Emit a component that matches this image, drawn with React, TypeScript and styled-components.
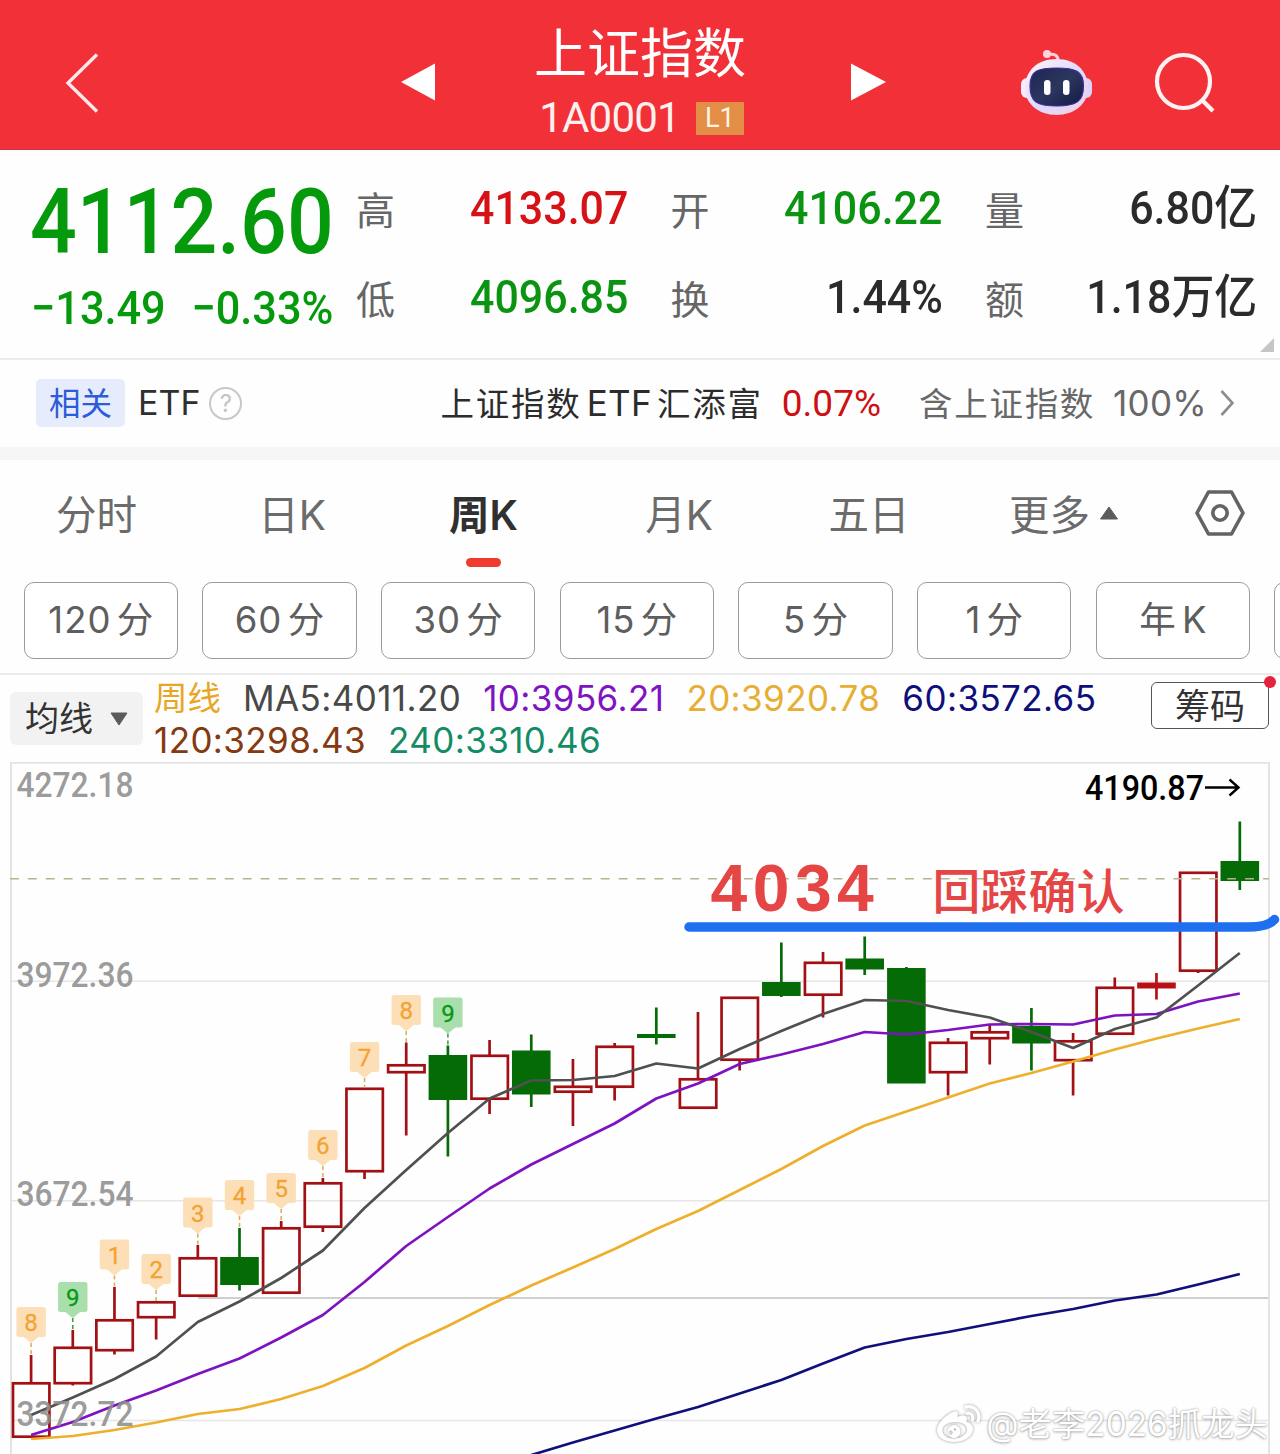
import React from 'react';
import styled, { createGlobalStyle } from 'styled-components';

const latin = `Inter, "Noto Sans CJK SC", sans-serif`;
const din = `Roboto, "Noto Sans CJK SC", sans-serif`;

const GlobalStyle = createGlobalStyle`
  * { box-sizing: border-box; }
  html, body { margin: 0; padding: 0; background: #fefefe; }
  body { font-family: ${latin}; overflow: hidden; }
`;

const Page = styled.main`
  width: 1280px;
  height: 1454px;
  overflow: hidden;
  display: flex;
  flex-direction: column;
  position: relative;
  background: #fefefe;
  white-space: nowrap;
`;

/* ---------- header ---------- */
const Header = styled.header`
  height: 150px;
  flex: none;
  display: grid;
  grid-template-columns: 400px 37px 405px 45px 133px 74px 186px;
  align-items: center;
  background: #f23038;
  border-bottom: 1px solid #c9383f;
  color: #fff;
  svg { display: block; }
`;
const BackSlot = styled.div`
  padding: 17px 0 0 64px;
`;
const ArrowSlot = styled.div<{ $end?: boolean }>`
  padding-top: 15px;
  display: flex;
  justify-content: ${(p) => (p.$end ? 'flex-end' : 'flex-start')};
`;
const TitleBlock = styled.div`
  display: flex;
  flex-direction: column;
  align-items: center;
  padding: 20px 0 0 1px;
`;
const Title = styled.h1`
  margin: 0;
  font: 400 53px/66px ${latin};
`;
const CodeRow = styled.div`
  display: flex;
  align-items: center;
  gap: 16px;
  height: 62px;
  padding-left: 3px;
`;
const Code = styled.span`
  font: 400 42px/60px ${din};
  letter-spacing: -0.8px;
  color: #fff0f0;
`;
const Level = styled.span`
  width: 48px;
  height: 33px;
  margin-top: 2px;
  background: #e38e46;
  font: 400 27px/33px ${din};
  color: #fff4e6;
  text-align: center;
`;
const RobotSlot = styled.div`
  padding-top: 14px;
`;
const SearchSlot = styled.div`
  padding: 17px 0 0 60px;
`;

/* ---------- quote ---------- */
const Quote = styled.section`
  height: 210px;
  flex: none;
  display: grid;
  grid-template-columns: 325px 1fr;
  padding: 13px 22px 0 31px;
  border-bottom: 2px solid #ececec;
  position: relative;
`;
const PriceCol = styled.div`
  color: #049a0c;
  font-family: ${din};
  font-weight: 500;
`;
const Price = styled.div`
  margin-left: -1px;
  font-size: 91px;
  line-height: 118px;
  height: 116px;
  transform: scaleX(0.905);
  transform-origin: left;
`;
const Changes = styled.div`
  display: flex;
  gap: 28px;
  font-size: 47px;
  line-height: 57px;
  transform: scaleX(0.92);
  transform-origin: left;
`;
const Stats = styled.div`
  display: grid;
  grid-template-columns: repeat(3, 272px);
  grid-auto-rows: 89px;
  column-gap: 42.5px;
`;
const Stat = styled.div`
  display: flex;
  justify-content: space-between;
`;
const StatLabel = styled.span`
  font: 400 39px/96px ${latin};
  color: #666;
`;
const StatValue = styled.span<{ $color: string }>`
  font: 500 47px/89px ${din};
  color: ${(p) => p.$color};
  transform: scaleX(0.913);
  transform-origin: right;
`;
const Corner = styled.i`
  position: absolute;
  right: 6px;
  bottom: 6px;
  border-left: 14px solid transparent;
  border-bottom: 14px solid #c6c6c6;
`;

/* ---------- related ETF ---------- */
const Related = styled.section`
  height: 100px;
  flex: none;
  display: flex;
  align-items: center;
  padding: 0 46px 1px 36px;
  border-bottom: 13px solid #f6f6f6;
`;
const Badge = styled.span`
  width: 89px;
  height: 48px;
  border-radius: 5px;
  background: #e7ecfd;
  color: #2d5cd8;
  text-align: center;
  font: 400 31.5px/49px ${latin};
`;
const EtfLabel = styled.span`
  margin: 0 9px 0 13px;
  font: 400 34px/50px ${latin};
  color: #2f2f2f;
`;
const Help = styled.span`
  width: 33px;
  height: 33px;
  border: 2px solid #c8c8c8;
  border-radius: 50%;
  color: #c4c4c4;
  text-align: center;
  font: 400 24px/29px ${latin};
`;
const EtfName = styled.span`
  margin-left: auto;
  font: 400 33.5px/50px ${latin};
  letter-spacing: 1.8px;
  color: #2c2c2c;
  span { font-size: 35px; letter-spacing: 0.3px; margin: 0 5px; }
`;
const EtfChange = styled.span`
  margin: 2px 38px 0 19px;
  font: 400 37px/50px ${din};
  color: #cc1014;
`;
const EtfShare = styled.span`
  margin-right: 13px;
  font: 400 33.5px/50px ${latin};
  letter-spacing: 1.7px;
  color: #686868;
  span { margin-left: 18px; font-size: 35px; letter-spacing: 0.3px; }
`;

/* ---------- period tabs ---------- */
const Tabs = styled.nav`
  height: 122px;
  flex: none;
  display: grid;
  grid-template-columns: 193px 198px 185px 206px 174px 240px 84px;
`;
const Tab = styled.div<{ $active?: boolean }>`
  display: flex;
  flex-direction: column;
  align-items: center;
  font: 400 40.5px/112px ${latin};
  font-weight: ${(p) => (p.$active ? 600 : 400)};
  color: ${(p) => (p.$active ? '#303030' : '#6b6b6b')};
  &::after {
    content: '';
    width: 35px;
    height: 9px;
    margin-top: -14px;
    border-radius: 4.5px;
    background: ${(p) => (p.$active ? '#f03b30' : 'transparent')};
  }
`;
const More = styled.div`
  display: flex;
  gap: 9px;
  padding-left: 53px;
  font: 400 40.5px/112px ${latin};
  color: #6b6b6b;
  svg { margin-top: 46px; }
`;
const SettingsSlot = styled.div`
  padding: 30px 0 0;
  margin-left: -1px;
`;
const Chips = styled.div`
  height: 93px;
  flex: none;
  display: flex;
  align-items: flex-start;
  gap: 24.2px;
  padding-left: 23.5px;
  overflow: hidden;
  border-bottom: 2px solid #ececec;
`;
const Chip = styled.button`
  flex: none;
  width: 154.5px;
  height: 77px;
  padding: 0 0 0 1px;
  border: 1.5px solid #9b9b9b;
  border-radius: 10px;
  background: #fff;
  font: 400 36.5px/75px ${latin};
  color: #5e5e5e;
  letter-spacing: 1px;
  word-spacing: -6px;
`;

/* ---------- averages ---------- */
const Averages = styled.section`
  height: 87px;
  flex: none;
  display: grid;
  grid-template-columns: 133px 1fr 118px;
  column-gap: 11px;
  align-items: start;
  padding: 0 11px 0 10px;
`;
const Picker = styled.button`
  display: flex;
  align-items: center;
  justify-content: space-between;
  height: 53px;
  margin-top: 17px;
  padding: 0 15px;
  border: 0;
  border-radius: 6px;
  background: #f2f2f2;
  font: 400 34px/52px ${latin};
  color: #333;
`;
const Legend = styled.div`
  display: flex;
  flex-wrap: wrap;
  column-gap: 22px;
  padding-top: 2px;
  font: 400 35px/42px ${latin};
`;
const LegendItem = styled.span<{ $color: string; $name?: boolean }>`
  color: ${(p) => p.$color};
  font-size: ${(p) => (p.$name ? 33.5 : 35)}px;
  letter-spacing: ${(p) => (p.$name ? 0 : 0.4)}px;
`;
const ChipsButton = styled.button`
  position: relative;
  height: 47px;
  margin-top: 7px;
  padding: 0;
  border: 1.5px solid #555;
  border-radius: 6px;
  background: #fff;
  font: 400 35px/44px ${latin};
  color: #333;
  &::after {
    content: '';
    position: absolute;
    top: -7px;
    right: -8px;
    width: 12px;
    height: 12px;
    border-radius: 50%;
    background: #e5233d;
  }
`;

/* ---------- chart ---------- */
const ChartArea = styled.section`
  position: relative;
  height: 692px;
  svg { display: block; }
`;
const Watermark = styled.div`
  position: absolute;
  right: 12px;
  bottom: 6px;
  display: flex;
  align-items: center;
  gap: 4px;
  color: #fff;
  font: 400 33.4px/48px ${latin};
  text-shadow: 0 0 2px rgba(0, 0, 0, 0.36), 0 1px 3px rgba(0, 0, 0, 0.26);
  svg { filter: drop-shadow(0 0 1.5px rgba(0, 0, 0, 0.42)); }
`;

type Kind = 'up' | 'down' | 'flat';
type Candle = [Kind, number, number, number, number];

const candles: Candle[] = [
  ['up', 1355, 1382, 1438, 1438],
  ['up', 1330, 1346.5, 1384.5, 1385.5],
  ['up', 1287, 1319, 1351.5, 1354.5],
  ['up', 1301, 1301, 1318.5, 1339.5],
  ['up', 1245, 1257, 1297, 1297],
  ['down', 1228, 1257, 1285, 1290.5],
  ['up', 1221, 1227, 1294, 1294],
  ['up', 1178, 1182, 1228, 1232],
  ['up', 1087.5, 1087.5, 1172.5, 1179],
  ['up', 1042.5, 1064, 1073.5, 1135.5],
  ['down', 1045.5, 1055, 1100, 1156.5],
  ['up', 1040, 1054.5, 1100, 1114],
  ['down', 1034.5, 1050.5, 1094.5, 1107],
  ['up', 1059, 1085.5, 1093, 1126],
  ['up', 1043, 1045.5, 1088, 1100.5],
  ['down', 1007.5, 1034, 1038, 1044.5],
  ['up', 1012, 1078, 1109, 1109],
  ['up', 996.5, 996.5, 1061, 1070.5],
  ['down', 942.5, 982, 996, 997],
  ['up', 952, 961.5, 996, 1017.5],
  ['down', 936.5, 958.5, 969.5, 975],
  ['down', 967, 968, 1083.5, 1083.5],
  ['up', 1038, 1041.5, 1073.5, 1095.5],
  ['up', 1025, 1031, 1039.5, 1064.5],
  ['down', 1008, 1026, 1043.5, 1070.5],
  ['up', 1033, 1040, 1061.5, 1095.5],
  ['up', 977.5, 986.5, 1035, 1035],
  ['flat', 973, 982.5, 988.5, 999.5],
  ['up', 871.5, 871.5, 972, 973],
  ['down', 821.5, 861, 881, 890],
];

const ma5 = [1415, 1397.5, 1379, 1356.5, 1322, 1301.5, 1278, 1250.5, 1208, 1170, 1133, 1098.5, 1080.5, 1080, 1076, 1063.5, 1068.5, 1049, 1031, 1014, 1000, 1001, 1010, 1017.5, 1032, 1048, 1029, 1017.5, 985.5, 953];
const ma10 = [1435, 1422, 1405.5, 1390.5, 1374, 1358.5, 1337.5, 1315, 1282, 1246, 1217, 1188.5, 1164.5, 1144, 1123.5, 1098.5, 1083.5, 1064, 1054.5, 1044, 1032, 1034.5, 1030, 1024.5, 1024, 1024.5, 1015.5, 1014, 1001.5, 993.5];
const ma20 = [1439, 1436, 1430, 1422.5, 1414, 1409, 1399, 1386, 1368, 1345.5, 1326, 1305, 1285.5, 1267.5, 1249, 1229, 1211, 1190, 1169, 1146, 1125.5, 1111.5, 1097.5, 1083.5, 1073, 1061.5, 1049.5, 1038.5, 1028.5, 1019];
const ma60 = [1455, 1442.5, 1430.5, 1418.5, 1407, 1393.5, 1380, 1363.5, 1347.5, 1339, 1332, 1324, 1316, 1309, 1300.5, 1294.5, 1284.5, 1274];

const xAt = (i: number) => 31.1 + i * 41.68;
const points = (values: number[], start = 0) =>
  values.map((y, i) => `${xAt(i + start).toFixed(1)},${y}`).join(' ');

const tags: [number, number][] = [
  [8, 1307], [9, 1282], [1, 1239.5], [2, 1254], [3, 1197.5], [4, 1180],
  [5, 1173], [6, 1130], [7, 1042], [8, 995], [9, 997.5],
];
const axis: [string, number][] = [
  ['4272.18', 797], ['3972.36', 986.5], ['3672.54', 1206], ['3372.72', 1425.5],
];

const CandleShape = ({ candle, x }: { candle: Candle; x: number }) => {
  const [kind, high, top, bottom, low] = candle;
  const color = kind === 'down' ? '#046b06' : kind === 'up' ? '#a31014' : '#b81014';
  return (
    <g stroke={color} strokeWidth={2.7}>
      {high < top && <line x1={x} x2={x} y1={high} y2={top + 1} />}
      {low > bottom && <line x1={x} x2={x} y1={bottom - 1} y2={low} />}
      {kind === 'up' ? (
        <rect x={x - 18.1} y={top + 1.3} width={36.4} height={bottom - top - 2.6} fill="none" />
      ) : (
        <rect x={x - 19.3} y={top} width={38.6} height={bottom - top} fill={color} stroke="none" />
      )}
    </g>
  );
};

const Tag = ({ value, x, y, end }: { value: number; x: number; y: number; end: number }) => {
  const green = value === 9;
  const fill = green ? '#a9dfac' : '#fcdfb6';
  return (
    <g>
      <line x1={x} x2={x} y1={y + 36} y2={end} stroke={green ? '#4b9a4b' : '#d3b560'} strokeWidth={1.6} strokeDasharray="4 3" />
      <rect x={x - 14.7} y={y} width={29.4} height={30} rx={2.5} fill={fill} />
      <path d={`M${x - 8} ${y + 29.5}h16l-5.500 4.500q-2.500 3.500 -5 0z`} fill={fill} />
      <text x={x} y={y + 24} textAnchor="middle" fontFamily="Roboto, sans-serif" fontSize={24} fontWeight={400} stroke={green ? '#069a10' : '#f3a234'} strokeWidth={0.3} fill={green ? '#069a10' : '#f3a234'}>
        {value}
      </text>
    </g>
  );
};

const Chart = () => (
  <svg width="1280" height="692" viewBox="0 762 1280 692">
    <g stroke="#e6e6e6" strokeWidth={1.6}>
      <line x1={11} x2={1269} y1={981.3} y2={981.3} />
      <line x1={11} x2={1269} y1={1200.8} y2={1200.8} />
      <line x1={11} x2={1269} y1={1420.5} y2={1420.5} />
    </g>
    <rect x={11} y={762.8} width={1258} height={720} fill="none" stroke="#e4e4e4" strokeWidth={2} />
    <line x1={198} x2={1268} y1={1298} y2={1298} stroke="#cfcfcf" strokeWidth={2.2} />
    {candles.map((c, i) => (
      <CandleShape key={i} candle={c} x={xAt(i)} />
    ))}
    <line x1={10} x2={1269} y1={878.800} y2={878.800} stroke="#b7b291" strokeWidth={1.5} strokeDasharray="8.9 9" />
    <g fill="none" strokeWidth={2.7} strokeLinejoin="round">
      <polyline points={points(ma60, 12)} stroke="#10107c" />
      <polyline points={points(ma20)} stroke="#eeb02c" />
      <polyline points={points(ma10)} stroke="#7d12c0" />
      <polyline points={points(ma5)} stroke="#505050" />
    </g>
    {tags.map(([value, y], i) => (
      <Tag key={i} value={value} x={xAt(i)} y={y} end={candles[i][1]} />
    ))}
    <g fontFamily="Roboto, sans-serif" fontSize={35.500} fontWeight={500}>
      {axis.map(([label, y]) => (
        <text key={label} x={16.500} y={y} fill="#8e8e8e" fillOpacity={0.9} textLength={117} lengthAdjust="spacingAndGlyphs">
          {label}
        </text>
      ))}
      <text x={1085} y={800} fill="#000" textLength={119} lengthAdjust="spacingAndGlyphs">4190.87</text>
    </g>
    <path d="M1205 787.500H1238M1229.500 779.500L1238.500 787.500L1229.500 795.500" fill="none" stroke="#000" strokeWidth={2.4} />
    <text x={710.500} y={911} fontFamily='"Liberation Sans", sans-serif' fontSize={66} fontWeight={700} letterSpacing={5.500} fill="#e64546">4034</text>
    <text x={932.500} y={908.500} fontFamily='"Noto Sans CJK SC", sans-serif' fontSize={48} fontWeight={500} fill="#e64546">回踩确认</text>
    <path d="M689 927H1248Q1268 927 1274.500 919.500" fill="none" stroke="#1f70f0" strokeWidth={9.500} strokeLinecap="round" />
  </svg>
);

const Robot = () => (
  <svg width="74" height="68" viewBox="0 0 74 68">
    <defs>
      <linearGradient id="shell" x1="0" y1="0" x2="1" y2="1">
        <stop offset="0" stopColor="#fff3f7" />
        <stop offset=".55" stopColor="#dfd9fb" />
        <stop offset="1" stopColor="#f4cfe4" />
      </linearGradient>
      <linearGradient id="visor" x1="0" y1="0" x2="1" y2="1">
        <stop offset="0" stopColor="#1c2650" />
        <stop offset=".5" stopColor="#2c365f" />
        <stop offset="1" stopColor="#111a44" />
      </linearGradient>
    </defs>
    <path d="M28 6.500q10-2 10.500 7" fill="none" stroke="#fbd0dc" strokeWidth="3" />
    <circle cx="27" cy="6" r="4" fill="#fcd3de" />
    <rect x="1" y="30" width="12" height="20" rx="6" fill="#f3ebff" />
    <rect x="60" y="30" width="12" height="20" rx="6" fill="#d9d3fa" />
    <path d="M36.500 11C55 11 67 22 68 38C69 56 54 67 36.500 67S4 56 5 38C6 22 18 11 36.500 11z" fill="url(#shell)" />
    <path d="M37 20C55 20 63.500 23 63.500 38S57 58 37 58S10 54 10 38S19 20 37 20z" fill="url(#visor)" stroke="#3a31a0" strokeWidth="1.200" />
    <rect x="24" y="32" width="6.500" height="15" rx="3.200" fill="#fff" />
    <rect x="43" y="32" width="6.500" height="15" rx="3.200" fill="#fff" />
  </svg>
);

const WeiboLogo = () => (
  <svg width="46" height="40" viewBox="0 0 46 40">
    <path fill="#fff" fillRule="evenodd" d="M17 8c3-2 6 0 4.500 5 4-2 10-2.500 9.500 2-.2 1.500-.8 2.500 0 3 3 1 6 3 6 7 0 7-9 13-19 13S1 33 1 26C1 19 11 10 17 8zM19 18C11 18 6 22 6.500 27s6 8 13 7.500 12-5 11.500-9.500S26 18 19 18zM18 21a6.500 6.500 0 1 0 .1 0zM14.500 26.500a2.200 2.200 0 1 1-.1 0zM19 24.600a1 1 0 1 1-.1 0z" />
    <path d="M30 3c9-2 15 6 12 14" fill="none" stroke="#fff" strokeWidth="3.400" strokeLinecap="round" />
    <path d="M31 9.500c4-1 7 2.500 5.500 6.500" fill="none" stroke="#fff" strokeWidth="3" strokeLinecap="round" />
  </svg>
);

const GREEN = '#0b9412';
const RED = '#d61216';
const INK = '#2b2b2b';
const stats = [
  ['高', '4133.07', RED], ['开', '4106.22', GREEN], ['量', '6.80亿', INK],
  ['低', '4096.85', GREEN], ['换', '1.44%', INK], ['额', '1.18万亿', INK],
];
const chips = ['120 分', '60 分', '30 分', '15 分', '5 分', '1 分', '年 K', ''];

export default function App() {
  return (
    <Page>
      <GlobalStyle />
      <Header>
        <BackSlot>
          <svg width="36" height="60" viewBox="0 0 36 60"><path d="M33 1.500L4 30L33 58.500" fill="none" stroke="#ffe9ea" strokeWidth="3.400" /></svg>
        </BackSlot>
        <ArrowSlot>
          <svg width="35" height="38" viewBox="0 0 35 38"><path d="M1 19L35 .5v37z" fill="#fff" /></svg>
        </ArrowSlot>
        <TitleBlock>
          <Title>上证指数</Title>
          <CodeRow>
            <Code>1A0001</Code>
            <Level>L1</Level>
          </CodeRow>
        </TitleBlock>
        <ArrowSlot $end>
          <svg width="36" height="38" viewBox="0 0 36 38"><path d="M35 19L0 .5v37z" fill="#fff" /></svg>
        </ArrowSlot>
        <i />
        <RobotSlot><Robot /></RobotSlot>
        <SearchSlot>
          <svg width="62" height="62" viewBox="0 0 62 62" fill="none" stroke="#fff2f2" strokeWidth="4.200">
            <circle cx="29.500" cy="29.500" r="26.500" />
            <path d="M48 48L59 59" />
          </svg>
        </SearchSlot>
      </Header>

      <Quote>
        <PriceCol>
          <Price>4112.60</Price>
          <Changes><span>−13.49</span><span>−0.33%</span></Changes>
        </PriceCol>
        <Stats>
          {stats.map(([label, value, color]) => (
            <Stat key={label}>
              <StatLabel>{label}</StatLabel>
              <StatValue $color={color}>{value}</StatValue>
            </Stat>
          ))}
        </Stats>
        <Corner />
      </Quote>

      <Related>
        <Badge>相关</Badge>
        <EtfLabel>ETF</EtfLabel>
        <Help>?</Help>
        <EtfName>上证指数<span>ETF</span>汇添富</EtfName>
        <EtfChange>0.07%</EtfChange>
        <EtfShare>含上证指数<span>100%</span></EtfShare>
        <svg width="14" height="28" viewBox="0 0 14 28"><path d="M1.500 2L12.500 14L1.500 26" fill="none" stroke="#8c8c8c" strokeWidth="2.600" /></svg>
      </Related>

      <Tabs>
        <Tab>分时</Tab>
        <Tab>日K</Tab>
        <Tab $active>周K</Tab>
        <Tab>月K</Tab>
        <Tab>五日</Tab>
        <More>
          更多
          <svg width="20" height="14" viewBox="0 0 20 14"><path d="M10 1L18.500 13H1.500z" fill="#5c5c5c" stroke="#5c5c5c" strokeLinejoin="round" /></svg>
        </More>
        <SettingsSlot>
          <svg width="50" height="46" viewBox="0 0 50 46" fill="none" stroke="#636363" strokeWidth="3.600" strokeLinejoin="round">
            <path d="M13.500 2H36.500L48 23L36.500 44H13.500L2 23z" />
            <circle cx="25" cy="23" r="7.200" />
          </svg>
        </SettingsSlot>
      </Tabs>
      <Chips>
        {chips.map((c, i) => <Chip key={i}>{c}</Chip>)}
      </Chips>

      <Averages>
        <Picker>
          均线
          <svg width="18" height="14" viewBox="0 0 18 14"><path d="M1 1H17L9 13z" fill="#5a5a5a" stroke="#5a5a5a" strokeLinejoin="round" /></svg>
        </Picker>
        <Legend>
          <LegendItem $color="#e9a623" $name>周线</LegendItem>
          <LegendItem $color="#484848">MA5:4011.20</LegendItem>
          <LegendItem $color="#7f12c2">10:3956.21</LegendItem>
          <LegendItem $color="#e6ae33">20:3920.78</LegendItem>
          <LegendItem $color="#0e0e7c">60:3572.65</LegendItem>
          <LegendItem $color="#85390f">120:3298.43</LegendItem>
          <LegendItem $color="#138c66">240:3310.46</LegendItem>
        </Legend>
        <ChipsButton>筹码</ChipsButton>
      </Averages>

      <ChartArea>
        <Chart />
        <Watermark>
          <WeiboLogo />
          <span>@老李2026抓龙头</span>
        </Watermark>
      </ChartArea>
    </Page>
  );
}
